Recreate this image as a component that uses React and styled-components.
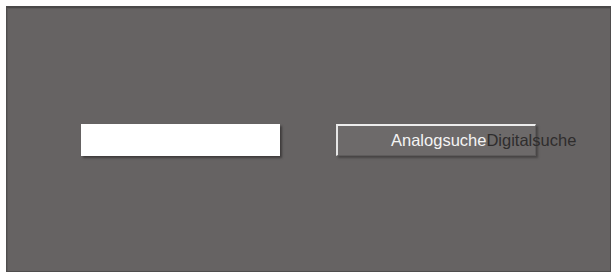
import React from 'react';
import styled, { createGlobalStyle } from 'styled-components';

const GlobalStyle = createGlobalStyle`
  html, body {
    margin: 0;
    padding: 0;
    background: #ffffff;
    font-family: "Liberation Sans", Arial, sans-serif;
  }
`;

const Page = styled.div`
  width: 614px;
  height: 273px;
  padding: 6px 3px 1px 6px;
  box-sizing: border-box;
`;

const Panel = styled.div`
  height: 100%;
  box-sizing: border-box;
  background: #666363;
  border: 1px solid #4f4d4d;
  border-top: 2px solid #4a4848;
  box-shadow: inset 1px 1px 0 #5c5a5a;
  display: flex;
  align-items: center;
  padding: 0 0 0 74px;
`;

const Row = styled.div`
  display: flex;
  align-items: center;
  gap: 56px;
`;

const TextField = styled.input`
  width: 199px;
  height: 32px;
  box-sizing: border-box;
  border: none;
  background: #ffffff;
  box-shadow: 2px 2px 2px #3f3d3d;
  outline: none;
`;

const SearchButton = styled.div`
  width: 200px;
  height: 32px;
  box-sizing: border-box;
  background: #6d6a6a;
  border-top: 2px solid #ededed;
  border-left: 2px solid #e6e6e6;
  border-right: 1px solid #5e5c5c;
  border-bottom: 1px solid #5e5c5c;
  box-shadow: 2px 2px 2px #474545;
  display: flex;
  align-items: center;
  padding-left: 53px;
  white-space: nowrap;
  overflow: visible;
  font-size: 16.5px;
`;

const Label = styled.span`
  color: ${(p) => (p.$active ? '#f4f4f4' : '#2f2d2d')};
`;

export default function App() {
  return (
    <>
      <GlobalStyle />
      <Page>
        <Panel>
          <Row>
            <TextField type="text" />
            <SearchButton>
              <Label $active>Analogsuche</Label>
              <Label>Digitalsuche</Label>
            </SearchButton>
          </Row>
        </Panel>
      </Page>
    </>
  );
}
